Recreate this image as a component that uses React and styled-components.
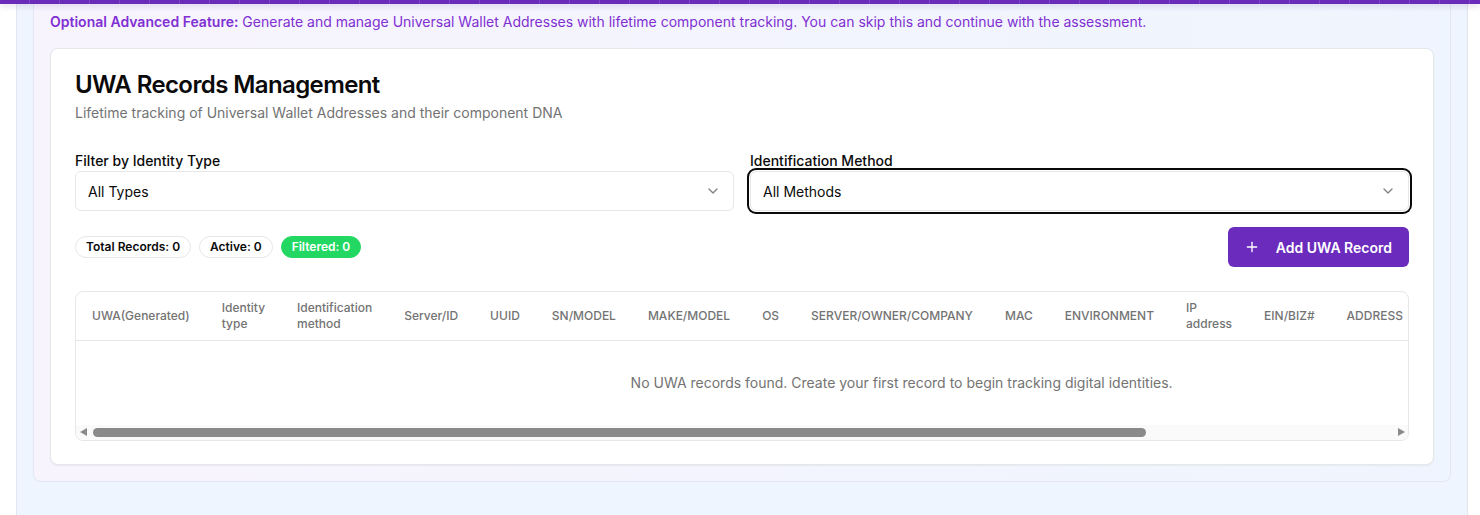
import React from "react";
import styled, { createGlobalStyle } from "styled-components";
import { ChevronDown, Plus } from "lucide-react";

const GlobalStyle = createGlobalStyle`
  html, body { margin: 0; padding: 0; background: #ffffff; }
  body { font-family: Inter, "Noto Sans", "Liberation Sans", sans-serif; color: #0a0a0a; -webkit-font-smoothing: antialiased; }
  * { box-sizing: border-box; }
`;

const TopBar = styled.div`
  position: relative;
  z-index: 2;
  height: 4px;
  background: repeating-linear-gradient(90deg, #6a2bbb 0 29px, #7a46c6 29px 30px);
  box-shadow: 0 2px 6px rgba(60, 20, 110, 0.18);
`;

const Shell = styled.div`
  margin: 0 12px 0 16px;
  min-height: calc(100vh - 4px);
  background: #eff5fe;
  border-left: 1px solid #e2e6ee;
  border-right: 1px solid #e2e6ee;
  padding: 0 16px 34px;
`;

const Panel = styled.section`
  background: linear-gradient(90deg, #f8f4fe 0%, #eff5fe 100%);
  border: 1px solid #e2e6f0;
  border-top: none;
  border-radius: 0 0 8px 8px;
  padding: 8px 16px 16px;
`;

const Notice = styled.p`
  margin: 0 0 16px;
  font-size: 14px;
  line-height: 20px;
  color: #8030d2;
  strong { font-weight: 600; }
`;

const Card = styled.div`
  background: #ffffff;
  border: 1px solid #e5e7eb;
  border-radius: 8px;
  box-shadow: 0 1px 2px rgba(0, 0, 0, 0.05);
  padding: 24px 24px 23px;
`;

const Title = styled.h2`
  margin: 0;
  font-size: 24px;
  line-height: 24px;
  font-weight: 600;
  letter-spacing: -0.025em;
  color: #0a0a0a;
`;

const Subtitle = styled.p`
  margin: 6px 0 0;
  font-size: 14px;
  line-height: 20px;
  color: #737373;
`;

const FilterGrid = styled.div`
  margin-top: 28px;
  display: grid;
  grid-template-columns: 1fr 1fr;
  gap: 16px;
`;

const Field = styled.div`
  display: flex;
  flex-direction: column;
`;

const Label = styled.label`
  font-size: 14px;
  line-height: 20px;
  font-weight: 500;
  color: #0a0a0a;
`;

const SelectBox = styled.button`
  display: flex;
  align-items: center;
  justify-content: space-between;
  height: 40px;
  width: 100%;
  padding: 0 12px;
  background: #ffffff;
  border: 1px solid #e5e7eb;
  border-radius: 6px;
  font-family: inherit;
  font-size: 14px;
  color: #0a0a0a;
  text-align: left;
  box-shadow: ${(p) => (p.$focused ? "0 0 0 1px #ffffff, 0 0 0 3px #0a0a0a" : "none")};
  svg { opacity: 0.5; flex: none; }
`;

const ActionRow = styled.div`
  margin-top: 16px;
  display: flex;
  align-items: center;
  justify-content: space-between;
`;

const Badges = styled.div`
  display: flex;
  gap: 8px;
  align-items: center;
  margin-top: -1px;
`;

const Badge = styled.span`
  display: inline-flex;
  align-items: center;
  height: 22px;
  padding: 0 10px;
  border-radius: 999px;
  font-size: 12px;
  font-weight: 600;
  border: 1px solid ${(p) => (p.$tone === "green" ? "#22d862" : "#e5e7eb")};
  background: ${(p) => (p.$tone === "green" ? "#22d862" : "#ffffff")};
  color: ${(p) => (p.$tone === "green" ? "#ffffff" : "#0a0a0a")};
`;

const AddButton = styled.button`
  display: inline-flex;
  align-items: center;
  gap: 16px;
  height: 40px;
  padding: 0 17px 0 16px;
  border: none;
  border-radius: 6px;
  background: #6b2bbd;
  color: #ffffff;
  font-family: inherit;
  font-size: 14px;
  font-weight: 600;
  cursor: pointer;
`;

const TableFrame = styled.div`
  margin-top: 24px;
  border: 1px solid #e5e7eb;
  border-radius: 8px;
  overflow: hidden;
`;

const TableViewport = styled.div`
  overflow: hidden;
`;

const Table = styled.table`
  border-collapse: collapse;
  min-width: 100%;
  width: max-content;
  font-size: 14px;
`;

const HeadCell = styled.th`
  height: 48px;
  padding: 0 16px;
  text-align: left;
  vertical-align: middle;
  font-size: 12px;
  line-height: 16px;
  font-weight: 500;
  color: #737373;
  white-space: nowrap;
  border-bottom: 1px solid #e5e7eb;
`;

const EmptyCell = styled.td`
  padding: 32px 16px;
  text-align: center;
  font-size: 14px;
  line-height: 20px;
  color: #737373;
`;

const ScrollBar = styled.div`
  display: flex;
  align-items: center;
  height: 15px;
  background: #fafafa;
`;

const ScrollArrow = styled.div`
  flex: none;
  width: 16px;
  height: 15px;
  display: flex;
  align-items: center;
  justify-content: center;
  &::before {
    content: "";
    width: 0;
    height: 0;
    border-top: 4px solid transparent;
    border-bottom: 4px solid transparent;
    ${(p) =>
      p.$dir === "left"
        ? "border-right: 7px solid #8a8a8a; margin-left: -1px;"
        : "border-left: 7px solid #8a8a8a; margin-right: -3px;"}
  }
`;

const ScrollTrack = styled.div`
  flex: 1;
  height: 9px;
  display: flex;
  align-items: center;
`;

const ScrollThumb = styled.div`
  height: 9px;
  margin-left: 1px;
  width: ${(p) => p.$ratio * 100}%;
  border-radius: 5px;
  background: #8a8a8a;
`;

const columns = [
  ["UWA(Generated)"],
  ["Identity", "type"],
  ["Identification", "method"],
  ["Server/ID"],
  ["UUID"],
  ["SN/MODEL"],
  ["MAKE/MODEL"],
  ["OS"],
  ["SERVER/OWNER/COMPANY"],
  ["MAC"],
  ["ENVIRONMENT"],
  ["IP", "address"],
  ["EIN/BIZ#"],
  ["ADDRESS"],
  ["STATUS"],
  ["LAST MODIFIED BY"],
  ["ACTIONS"],
];

export default function App() {
  return (
    <>
      <GlobalStyle />
      <TopBar />
      <Shell>
        <Panel>
          <Notice>
            <strong>Optional Advanced Feature:</strong> Generate and manage Universal Wallet Addresses with
            lifetime component tracking. You can skip this and continue with the assessment.
          </Notice>
          <Card>
            <Title>UWA Records Management</Title>
            <Subtitle>Lifetime tracking of Universal Wallet Addresses and their component DNA</Subtitle>

            <FilterGrid>
              <Field>
                <Label>Filter by Identity Type</Label>
                <SelectBox type="button">
                  <span>All Types</span>
                  <ChevronDown size={16} strokeWidth={2} />
                </SelectBox>
              </Field>
              <Field>
                <Label>Identification Method</Label>
                <SelectBox type="button" $focused>
                  <span>All Methods</span>
                  <ChevronDown size={16} strokeWidth={2} />
                </SelectBox>
              </Field>
            </FilterGrid>

            <ActionRow>
              <Badges>
                <Badge>Total Records: 0</Badge>
                <Badge>Active: 0</Badge>
                <Badge $tone="green">Filtered: 0</Badge>
              </Badges>
              <AddButton type="button">
                <Plus size={16} strokeWidth={2} />
                Add UWA Record
              </AddButton>
            </ActionRow>

            <TableFrame>
              <TableViewport>
                <Table>
                  <thead>
                    <tr>
                      {columns.map((lines) => (
                        <HeadCell key={lines.join(" ")}>
                          {lines.map((l, i) => (
                            <React.Fragment key={l}>
                              {i > 0 && <br />}
                              {l}
                            </React.Fragment>
                          ))}
                        </HeadCell>
                      ))}
                    </tr>
                  </thead>
                  <tbody>
                    <tr>
                      <EmptyCell colSpan={columns.length}>
                        No UWA records found. Create your first record to begin tracking digital identities.
                      </EmptyCell>
                    </tr>
                  </tbody>
                </Table>
              </TableViewport>
              <ScrollBar>
                <ScrollArrow $dir="left" />
                <ScrollTrack>
                  <ScrollThumb $ratio={0.81} />
                </ScrollTrack>
                <ScrollArrow $dir="right" />
              </ScrollBar>
            </TableFrame>
          </Card>
        </Panel>
      </Shell>
    </>
  );
}
